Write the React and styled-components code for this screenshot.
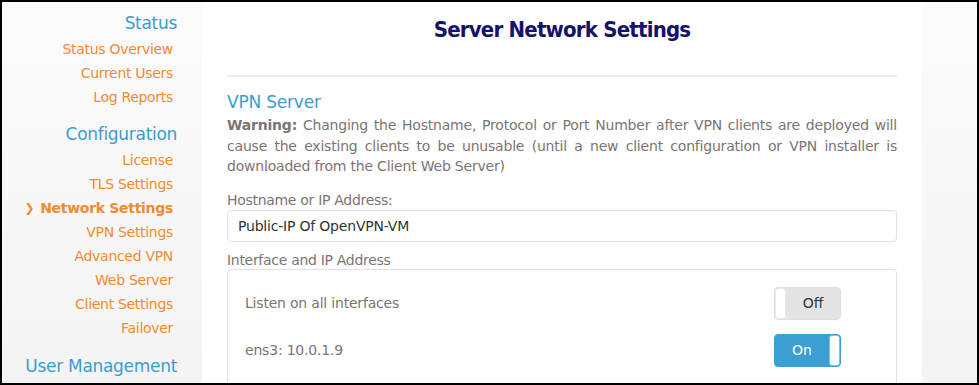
import React from 'react'
import styled, { createGlobalStyle } from 'styled-components'

const GlobalStyle = createGlobalStyle`
  html, body {
    margin: 0;
    padding: 0;
    background: #000;
  }
  * { box-sizing: border-box; }
`

const statusLinks = ['Status Overview', 'Current Users', 'Log Reports']
const configLinks = [
  'License',
  'TLS Settings',
  'Network Settings',
  'VPN Settings',
  'Advanced VPN',
  'Web Server',
  'Client Settings',
  'Failover',
]

const App = () => {
  return (
    <Frame>
      <GlobalStyle />
      <Sidebar>
        <NavHeading>Status</NavHeading>
        {statusLinks.map((l) => (
          <NavLink key={l}>{l}</NavLink>
        ))}
        <NavHeading gap={13}>Configuration</NavHeading>
        {configLinks.map((l) => (
          <NavLink key={l} active={l === 'Network Settings'}>
            {l === 'Network Settings' && <Chevron>&#x276F;</Chevron>}
            {l}
          </NavLink>
        ))}
        <NavHeading gap={14}>User Management</NavHeading>
      </Sidebar>

      <Main>
        <Title>Server Network Settings</Title>
        <Rule />
        <SectionTitle>VPN Server</SectionTitle>
        <Warning>
          <b>Warning:</b> Changing the Hostname, Protocol or Port Number after VPN clients are
          deployed will cause the existing clients to be unusable (until a new client
          configuration or VPN installer is downloaded from the Client Web Server)
        </Warning>

        <Label top={14}>Hostname or IP Address:</Label>
        <TextInput defaultValue="Public-IP Of OpenVPN-VM" />

        <Label top={9}>Interface and IP Address</Label>
        <Panel>
          <SwitchRow>
            <RowText>Listen on all interfaces</RowText>
            <Toggle>
              <Knob />
              <ToggleText>Off</ToggleText>
            </Toggle>
          </SwitchRow>
          <SwitchRow>
            <RowText>ens3: 10.0.1.9</RowText>
            <Toggle on>
              <ToggleText on>On</ToggleText>
              <Knob on />
            </Toggle>
          </SwitchRow>
        </Panel>
      </Main>

      <Aside />
    </Frame>
  )
}

export default App

const Frame = styled.div`
  width: 979px;
  height: 385px;
  border: 2px solid #000;
  background: #fff;
  display: grid;
  grid-template-columns: 200px 720px 1fr;
  overflow: hidden;
  font-family: "DejaVu Sans", Verdana, sans-serif;
`

const Sidebar = styled.nav`
  background: linear-gradient(180deg, #fbfbfb 0%, #f3f3f3 100%);
  display: flex;
  flex-direction: column;
  align-items: flex-end;
  padding: 9px 25px 0 0;
`

const NavHeading = styled.div`
  color: #3a9dd0;
  font-size: 17px;
  line-height: 24px;
  margin-top: ${(p) => (p.gap ? `${p.gap}px` : '0')};
  margin-bottom: 2px;
  letter-spacing: -0.3px;
`

const NavLink = styled.a`
  color: #f28a30;
  font-size: 14px;
  line-height: 24px;
  padding-right: 4px;
  font-weight: ${(p) => (p.active ? 'bold' : 'normal')};
  text-decoration: none;
  display: flex;
  align-items: center;
  letter-spacing: -0.3px;
`

const Chevron = styled.span`
  font-size: 12px;
  margin-right: 6px;
  font-weight: bold;
`

const Main = styled.main`
  background: #fff;
  padding: 0 25px;
  display: flex;
  flex-direction: column;
`

const Title = styled.h1`
  margin: 12px 0 0;
  text-align: center;
  color: #14126a;
  font-family: "DejaVu Sans Condensed", "DejaVu Sans", sans-serif;
  font-size: 22px;
  line-height: 32px;
  font-weight: bold;
  letter-spacing: -0.8px;
`

const Rule = styled.hr`
  margin: 29px 0 0;
  border: 0;
  border-top: 2px solid #ececec;
  width: 100%;
`

const SectionTitle = styled.h2`
  margin: 13px 0 0;
  font-size: 17px;
  line-height: 24px;
  font-weight: normal;
  color: #3a9dd0;
  letter-spacing: -0.2px;
`

const Warning = styled.p`
  margin: 1px 0 0;
  color: #7b7473;
  font-size: 14px;
  line-height: 20.5px;
  text-align: justify;
  letter-spacing: -0.2px;
`

const Label = styled.div`
  color: #7b7473;
  font-size: 14px;
  line-height: 18px;
  margin-top: ${(p) => p.top}px;
  letter-spacing: -0.3px;
`

const TextInput = styled.input`
  margin-top: 1px;
  height: 32px;
  border: 1px solid #e1e1e1;
  border-radius: 4px;
  padding: 0 10px;
  font-family: inherit;
  font-size: 14px;
  color: #333;
  outline: none;
  width: 100%;
  letter-spacing: -0.2px;
`

const Panel = styled.div`
  margin-top: 0;
  border: 1px solid #e1e1e1;
  border-radius: 4px;
  padding: 17px 55px 20px 17px;
  display: flex;
  flex-direction: column;
  gap: 14px;
  height: 140px;
`

const SwitchRow = styled.div`
  display: flex;
  justify-content: space-between;
  align-items: center;
`

const RowText = styled.span`
  color: #7b7473;
  font-size: 14px;
  letter-spacing: -0.2px;
`

const Toggle = styled.div`
  width: 67px;
  height: 33px;
  border-radius: 4px;
  border: 1px solid ${(p) => (p.on ? '#3a9fd0' : '#e0e0e0')};
  background: ${(p) => (p.on ? '#3ba0d1' : '#e4e4e4')};
  display: flex;
  align-items: stretch;
  overflow: hidden;
`

const Knob = styled.span`
  width: 11px;
  background: #fff;
  border-radius: 3px;
  border: 1px solid ${(p) => (p.on ? '#7cc0e2' : '#e8e8e8')};
`

const ToggleText = styled.span`
  flex: 1;
  display: flex;
  align-items: center;
  justify-content: center;
  font-size: 14px;
  color: ${(p) => (p.on ? '#fff' : '#333')};
`

const Aside = styled.div`
  background: linear-gradient(180deg, #fbfbfb 0%, #f3f3f3 100%);
`
